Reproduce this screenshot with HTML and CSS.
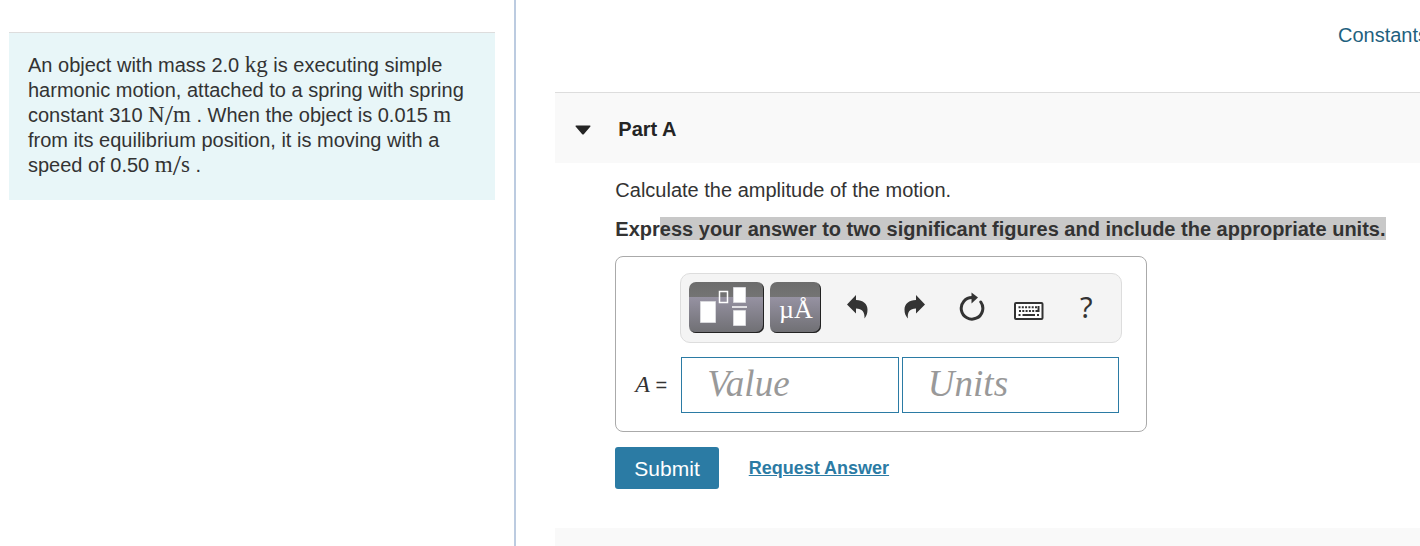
FILE: index.html
```html
<!DOCTYPE html>
<html lang="en">
<head>
<meta charset="utf-8">
<title>Part A</title>
<link rel="stylesheet" href="styles.css">
</head>
<body>
<div class="page">
  <aside class="problem-pane">
    <p class="problem">An object with mass 2.0 <span class="unit">kg</span> is executing simple harmonic motion, attached to a spring with spring constant 310 <span class="unit">N<span class="slash">/</span>m</span> . When the object is 0.015 <span class="unit">m</span> from its equilibrium position, it is moving with a speed of 0.50 <span class="unit">m<span class="slash">/</span>s</span> .</p>
  </aside>
  <main class="work-pane">
    <nav class="top-links"><a class="constants" href="#constants">Constants</a></nav>
    <section class="part">
      <header class="part-header">
        <button class="toggle" type="button" aria-label="Collapse Part A">
          <svg width="16" height="10" viewBox="0 0 16 10"><path d="M1 .5h14q1 .3.4 1L9 9q-1 1-2 0L.6 1.500Q0 .8 1 .5z" fill="#252525"/></svg>
        </button>
        <h2 class="part-title">Part A</h2>
      </header>
      <div class="part-body">
        <p class="question">Calculate the amplitude of the motion.</p>
        <p class="instruction">Expr<span class="selected">ess your answer to two significant figures and include the appropriate units.</span></p>
        <form class="answer" id="answer">
          <div class="toolbar">
            <button class="tile tile-wide" type="button" aria-label="Templates">
              <svg width="75" height="51" viewBox="0 0 75 51">
                <path d="M11.500 19.500h15v21h-15zM44.500 5.500h12v15h-12zM44.500 28.500h12v15h-12z" fill="#fff" stroke="#d8d8dc"/>
                <path d="M30.500 9.500h8v11h-8z" fill="none" stroke="#fff" stroke-width="1.500"/>
                <path d="M43 25h15" stroke="#fff" stroke-width="1.500"/>
              </svg>
            </button>
            <button class="tile" type="button" aria-label="Symbols">µÅ</button>
            <div class="actions">
              <button class="action" type="button" aria-label="Undo">
                <svg width="22" height="24" viewBox="0 0 22 24"><path d="M9 0v5C16 5 20.500 9 20.500 14.500c0 4-1 6.500-3 9C18 17 15 13.500 9 13.500V18.500L0 9.500z" fill="#333"/></svg>
              </button>
              <button class="action" type="button" aria-label="Redo">
                <svg width="22" height="24" viewBox="0 0 22 24"><path d="M12 0v5C5 5 .5 9 .5 14.500c0 4 1 6.500 3.500 9C3 17 6 13.500 12 13.500V18.500L21 9.500z" fill="#333"/></svg>
              </button>
              <button class="action" type="button" aria-label="Reset">
                <svg width="26" height="30" viewBox="0 0 26 30"><path d="M13.500 5.500A10.800 10.800 0 1 0 21.800 10" fill="none" stroke="#333" stroke-width="3" stroke-linecap="round"/><path d="M12.500 .5l6.500 5-6.500 6z" fill="#333"/></svg>
              </button>
              <button class="action" type="button" aria-label="Keyboard">
                <svg class="keyboard" width="30" height="18" viewBox="0 0 30 18"><rect x="1" y="1" width="27.500" height="16" rx="1" fill="#fff" stroke="#333" stroke-width="2"/><path d="M4.500 5.200H24M5 9H21.500" stroke="#333" stroke-width="2" stroke-dasharray="2 1.300"/><path d="M24.500 4v5h-3M4.500 13h2M8.500 13H21M23 13h2" fill="none" stroke="#333" stroke-width="2"/></svg>
              </button>
              <button class="action help" type="button" aria-label="Help">?</button>
            </div>
          </div>
          <label class="variable" for="value"><i>A</i> =</label>
          <div class="fields">
            <input class="field" id="value" type="text" placeholder="Value" aria-label="Value">
            <input class="field" id="units" type="text" placeholder="Units" aria-label="Units">
          </div>
        </form>
        <div class="submit-row">
          <button class="submit" type="submit" form="answer">Submit</button>
          <a class="request" href="#request">Request Answer</a>
        </div>
      </div>
    </section>
    <div class="next-part"></div>
  </main>
</div>
</body>
</html>
```
FILE: styles.css
```css
* { box-sizing: border-box; }
body {
  margin: 0;
  color: #333;
  background: #fff;
  font: 20px/25px "Liberation Sans", Arial, sans-serif;
}
p, h2 { margin: 0; }
button { padding: 0; border: 0; background: none; font: inherit; color: inherit; }
svg { display: block; }

.page {
  display: grid;
  grid-template-columns: 4fr 7fr;
  height: 100vh;
  overflow: hidden;
}
.problem-pane {
  padding: 32px 19px 0 9px;
  border-right: 2px solid #bccbe0;
}
.problem {
  padding: 20px 19px 22px;
  border-top: 1px solid #ddd;
  background: #e8f6f8;
}
.unit { font-family: "Liberation Serif", serif; font-size: 23px; line-height: 20px; }
.slash { font-size: 30px; line-height: 16px; vertical-align: -3px; }

.work-pane {
  display: flex;
  flex-direction: column;
  min-width: 0;
  padding-left: 39px;
}
.top-links {
  display: flex;
  justify-content: flex-end;
  margin-right: -8px;
  padding: 23px 0 44px;
}
.constants { color: #1f617e; text-decoration: none; }
.part-header {
  display: flex;
  align-items: center;
  gap: 27px;
  height: 71px;
  padding: 3px 20px 0;
  border-top: 1px solid #ddd;
  background: #f9f9f9;
}
.part-title { font-size: 20px; color: #252525; }
.part-body { padding: 15px 20px 39px 60px; }
.question { margin-bottom: 14px; }
.instruction { font-weight: bold; white-space: nowrap; }
.selected { padding: 1px 0 0; background: #c8c8c8; }

.answer {
  display: grid;
  grid-template-columns: 64px 1fr;
  row-gap: 14px;
  align-items: center;
  max-width: 532px;
  margin-top: 14px;
  padding: 16px 24px 18px 0;
  border: 1px solid #aaa;
  border-radius: 8px;
}
.toolbar {
  grid-column: 2;
  display: flex;
  align-items: center;
  gap: 6px;
  height: 70px;
  padding: 0 8px 2px;
  border: 1px solid #ddd;
  border-radius: 10px;
  background: #f4f4f4;
}
.tile {
  width: 51px;
  height: 51px;
  border-radius: 7px;
  background: linear-gradient(#6c6c6c, #747474 15px, #9692a2 15px, #6f6f73);
  box-shadow: inset -1px -1px 0 #222;
  color: #fff;
  font: 26px/56px "Liberation Serif", serif;
}
.tile-wide { width: 75px; }
.actions { display: flex; gap: 7px; padding-left: 6px; }
.action {
  display: flex;
  align-items: center;
  justify-content: center;
  width: 50px;
  height: 51px;
}
.keyboard { margin-top: 8px; }
.help { font: 29px/50px "Noto Sans", sans-serif; }
.variable { padding-left: 19px; white-space: nowrap; }
.variable i { font: italic 24px/25px "Liberation Serif", serif; }
.fields {
  display: grid;
  grid-template-columns: 1fr 1fr;
  gap: 3px;
  padding: 0 3px 0 1px;
}
.field {
  width: 100%;
  height: 56px;
  padding: 0 25px 4px;
  border: 1px solid #2b7ba4;
  border-radius: 0;
  background: #fff;
  font: italic 37px "Liberation Serif", serif;
}
.field::placeholder { color: #999; opacity: 1; }

.submit-row { display: flex; align-items: center; gap: 30px; margin-top: 15px; }
.submit {
  height: 42px;
  padding: 0 19px;
  border-radius: 3px;
  background: #2b7ba4;
  color: #fff;
  font-size: 21px;
}
.request { color: #2b7ba4; font-size: 18px; font-weight: bold; }
.next-part { flex: 1; min-height: 18px; background: #f9f9f9; }
```
